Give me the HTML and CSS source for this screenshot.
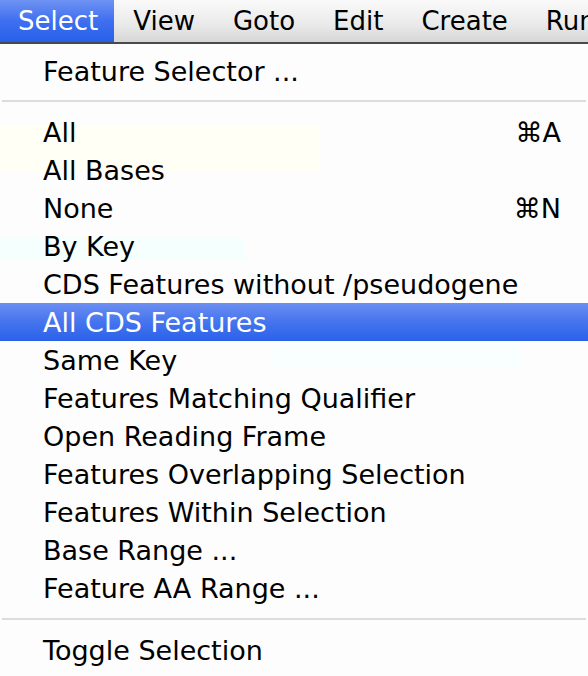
FILE: index.html
```html
<!DOCTYPE html>
<html>
<head>
<meta charset="utf-8">
<link rel="stylesheet" href="styles.css">
</head>
<body>
<div class="screen">
  <div class="menubar">
    <span class="mb-item active">Select</span>
    <span class="mb-item">View</span>
    <span class="mb-item">Goto</span>
    <span class="mb-item">Edit</span>
    <span class="mb-item">Create</span>
    <span class="mb-item">Run</span>
  </div>
  <div class="menu">
    <div class="ghost ghost-yellow"></div>
    <div class="ghost ghost-cyan"></div>
    <div class="ghost ghost-cyan2"></div>
    <div class="item first">Feature Selector ...</div>
    <div class="sep"></div>
    <div class="item"><span>All</span><span class="key">⌘A</span></div>
    <div class="item">All Bases</div>
    <div class="item"><span>None</span><span class="key">⌘N</span></div>
    <div class="item">By Key</div>
    <div class="item">CDS Features without /pseudogene</div>
    <div class="item selected">All CDS Features</div>
    <div class="item">Same Key</div>
    <div class="item">Features Matching Qualifier</div>
    <div class="item">Open Reading Frame</div>
    <div class="item">Features Overlapping Selection</div>
    <div class="item">Features Within Selection</div>
    <div class="item">Base Range ...</div>
    <div class="item">Feature AA Range ...</div>
    <div class="sep sep2"></div>
    <div class="item">Toggle Selection</div>
  </div>
</div>
</body>
</html>
```

FILE: styles.css
```css
html, body {
  margin: 0;
  padding: 0;
  background: #ffffff;
}
.screen {
  width: 588px;
  height: 676px;
  overflow: hidden;
  font-family: "DejaVu Sans", "Liberation Sans", sans-serif;
  font-size: 27px;
  color: #000;
}
.menubar {
  height: 42px;
  display: flex;
  align-items: stretch;
  background: linear-gradient(#fafafa, #e9e9e9 60%, #d6d6d6);
  border-bottom: 2px solid #4a4a4a;
  white-space: nowrap;
  font-size: 26px;
}
.mb-item {
  display: flex;
  align-items: center;
  padding: 0 19px;
}
.mb-item.active {
  background: linear-gradient(#6f93f3, #3f6ff0 50%, #2660ea);
  color: #fff;
  padding: 0 16px 0 18px;
}
.menu {
  position: relative;
  background: #fdfdfd;
  height: 632px;
  white-space: nowrap;
}
.ghost {
  position: absolute;
  border-radius: 4px;
}
.ghost-yellow {
  left: 0;
  top: 81px;
  width: 320px;
  height: 46px;
  background: #fffff5;
}
.ghost-cyan {
  left: 0;
  top: 194px;
  width: 245px;
  height: 22px;
  background: #f5fffd;
}
.ghost-cyan2 {
  left: 272px;
  top: 300px;
  width: 250px;
  height: 24px;
  background: #f8fffe;
}
.item {
  position: relative;
  height: 38px;
  display: flex;
  align-items: center;
  justify-content: space-between;
  padding: 0 27px 0 43px;
}
.item.first {
  height: 54px;
  padding-bottom: 2px;
}
.item.selected {
  background: linear-gradient(#6c8ff2, #4574ee 50%, #2a62ea);
  color: #fff;
}
.sep {
  position: relative;
  height: 2px;
  margin: 0 2px 11px 2px;
  background: #dcdcdc;
}
.sep2 {
  margin-top: 11px;
  margin-bottom: 11px;
}
```
